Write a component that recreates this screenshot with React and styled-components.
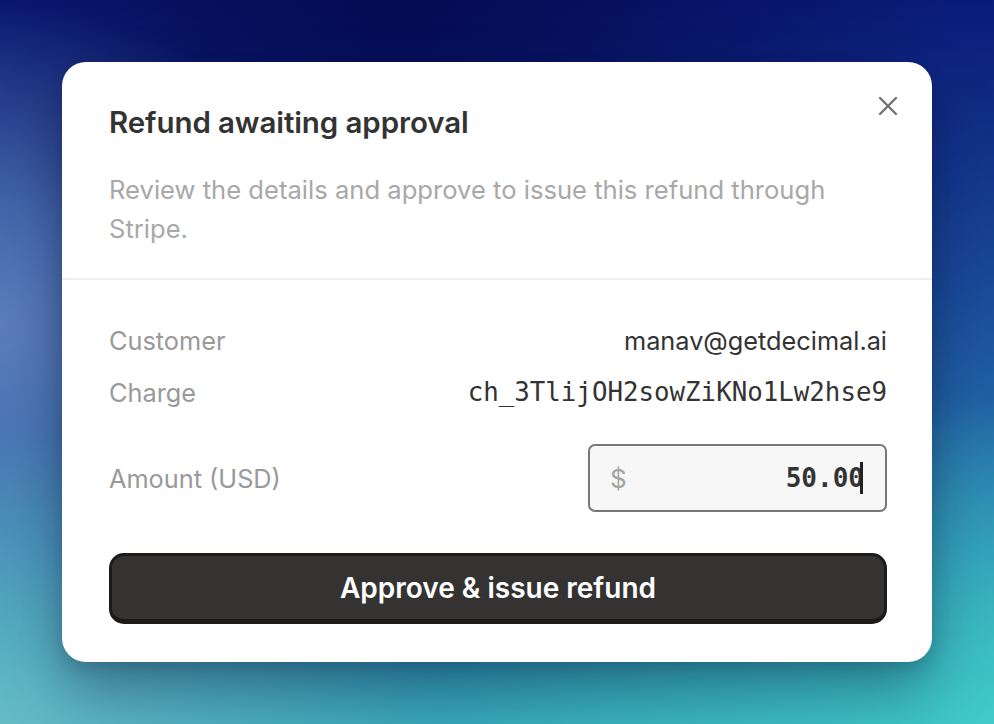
import React from 'react';
import styled, { createGlobalStyle } from 'styled-components';

const GlobalStyle = createGlobalStyle`
  html, body {
    margin: 0;
    padding: 0;
    height: 100%;
  }
  #root {
    height: 100%;
  }
`;

const Backdrop = styled.div`
  min-height: 724px;
  height: 100vh;
  display: flex;
  align-items: center;
  justify-content: center;
  font-family: Inter, "Noto Sans", sans-serif;
  background:
    radial-gradient(ellipse 60% 45% at 100% 100%, rgba(64, 204, 200, 0.95), rgba(64, 204, 200, 0) 100%),
    radial-gradient(ellipse 45% 40% at 0% 100%, rgba(110, 190, 200, 0.85), rgba(110, 190, 200, 0) 100%),
    radial-gradient(ellipse 35% 45% at 0% 45%, rgba(100, 130, 190, 0.9), rgba(100, 130, 190, 0) 100%),
    radial-gradient(ellipse 55% 40% at 40% 0%, rgba(5, 10, 80, 1), rgba(5, 10, 80, 0) 100%),
    linear-gradient(180deg, #0a1a78 0%, #1a4a9a 40%, #2a7fb0 75%, #38a8bc 100%);
`;

const Card = styled.div`
  width: 870px;
  background: #ffffff;
  border-radius: 24px;
  box-shadow: 0 30px 60px rgba(0, 10, 40, 0.35), 0 6px 18px rgba(0, 10, 40, 0.15);
  position: relative;
`;

const Header = styled.div`
  padding: 44px 47px 30px;
  border-bottom: 2px solid #f0f0f0;
`;

const Title = styled.h2`
  margin: 0;
  font-size: 29.5px;
  line-height: 32px;
  font-weight: 600;
  color: #333333;
  letter-spacing: -0.1px;
`;

const Description = styled.p`
  margin: 32px 0 0;
  font-size: 25.6px;
  line-height: 39px;
  color: #a8a8a8;
  max-width: 740px;
`;

const CloseButton = styled.button`
  position: absolute;
  top: 30px;
  right: 30px;
  width: 28px;
  height: 28px;
  padding: 0;
  border: none;
  background: none;
  display: flex;
  align-items: center;
  justify-content: center;
  color: #717171;
`;

const Body = styled.div`
  padding: 42px 45px 38px 47px;
`;

const Row = styled.div`
  display: flex;
  align-items: center;
  justify-content: space-between;
  height: 36px;
  margin-bottom: ${p => p.$gap || 0}px;
`;

const Label = styled.span`
  font-size: 25.3px;
  color: #999999;
`;

const Value = styled.span`
  font-size: 25.3px;
  color: #333333;
`;

const MonoValue = styled.span`
  font-family: "DejaVu Sans Mono", "Liberation Mono", monospace;
  font-size: 25.8px;
  color: #333333;
`;

const AmountRow = styled.div`
  display: flex;
  align-items: center;
  justify-content: space-between;
  margin-top: 34px;
`;

const AmountBox = styled.div`
  width: 299px;
  height: 68px;
  box-sizing: border-box;
  border: 2px solid #7a7672;
  border-radius: 7px;
  background: #f7f7f7;
  display: flex;
  align-items: center;
  padding: 0 22px 0 20px;
`;

const Currency = styled.span`
  font-size: 26px;
  color: #a3a3a3;
`;

const AmountValue = styled.span`
  margin-left: auto;
  font-family: "DejaVu Sans Mono", "Liberation Mono", monospace;
  font-size: 26px;
  font-weight: 600;
  color: #333333;
  display: flex;
  align-items: center;
`;

const Caret = styled.span`
  display: inline-block;
  width: 3px;
  height: 32px;
  background: #222222;
  margin-left: -4px;
`;

const ApproveButton = styled.button`
  margin-top: 41px;
  width: 100%;
  height: 71px;
  box-sizing: border-box;
  border: 3px solid #1d1b1a;
  border-bottom-width: 5px;
  border-radius: 15px;
  background: #353331;
  color: #ffffff;
  font-family: Inter, "Noto Sans", sans-serif;
  font-size: 28px;
  font-weight: 600;
  cursor: pointer;
`;

export default function App() {
  return (
    <>
      <GlobalStyle />
      <Backdrop>
        <Card>
          <CloseButton aria-label="Close">
            <svg width="20" height="20" viewBox="0 0 20 20" fill="none" stroke="currentColor" strokeWidth="2.4" strokeLinecap="round">
              <path d="M2 2 L18 18 M18 2 L2 18" />
            </svg>
          </CloseButton>
          <Header>
            <Title>Refund awaiting approval</Title>
            <Description>
              Review the details and approve to issue this refund through Stripe.
            </Description>
          </Header>
          <Body>
            <Row $gap={16}>
              <Label>Customer</Label>
              <Value>manav@getdecimal.ai</Value>
            </Row>
            <Row>
              <Label>Charge</Label>
              <MonoValue>ch_3TlijOH2sowZiKNo1Lw2hse9</MonoValue>
            </Row>
            <AmountRow>
              <Label>Amount (USD)</Label>
              <AmountBox>
                <Currency>$</Currency>
                <AmountValue>
                  50.00<Caret />
                </AmountValue>
              </AmountBox>
            </AmountRow>
            <ApproveButton>Approve &amp; issue refund</ApproveButton>
          </Body>
        </Card>
      </Backdrop>
    </>
  );
}
